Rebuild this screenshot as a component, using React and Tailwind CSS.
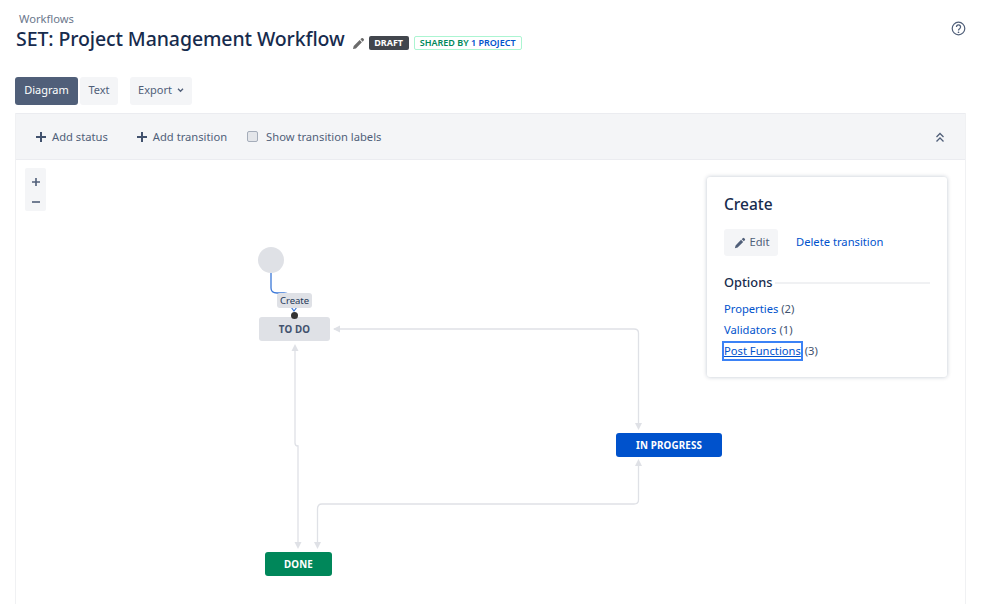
import React from "react";

const Pencil = ({ className }) => (
  <svg viewBox="0 0 16 16" className={className} fill="currentColor">
    <path d="M11.6 1.6a1.4 1.4 0 0 1 2 0l.8.8a1.4 1.4 0 0 1 0 2l-1.3 1.3-2.8-2.8zM9.4 3.8l2.8 2.8-7.4 7.4-3.6.9.9-3.7z" />
  </svg>
);

const Plus = () => (
  <svg viewBox="0 0 10 10" className="w-[10px] h-[10px]" fill="#42526e">
    <path d="M4 0h2v4h4v2H6v4H4V6H0V4h4z" />
  </svg>
);

const Node = ({ className, children }) => (
  <div className={`absolute flex items-center justify-center pt-[2px] rounded-[3px] text-[9.8px] tracking-[0.15px] font-bold h-[24px] ${className}`}>
    {children}
  </div>
);

const Arrow = ({ x, y, dir }) => {
  const pts = {
    down: `${x - 3.5},${y - 7} ${x + 3.5},${y - 7} ${x},${y}`,
    up: `${x - 3.5},${y + 7} ${x + 3.5},${y + 7} ${x},${y}`,
    left: `${x + 7},${y - 3.5} ${x + 7},${y + 3.5} ${x},${y}`,
  }[dir];
  return <polygon points={pts} fill="#dfe1e6" />;
};

export default function App() {
  return (
    <div className="relative w-[998px] h-[604px] overflow-hidden bg-white text-[#172b4d] font-['Noto_Sans','Open_Sans',sans-serif]">
      <div className="pl-[16px] pr-[32px] pt-[11px] flex justify-between items-start">
        <div>
          <div className="pl-[3px] text-[11.2px] leading-[15px] text-[#6b778c]">Workflows</div>
          <div className="flex items-center mt-[-1px]">
            <h1 className="text-[19.5px] leading-[28px] font-medium tracking-[-0.1px] whitespace-nowrap">SET: Project Management Workflow</h1>
            <Pencil className="w-[13px] h-[13px] ml-[7px] mt-[8px] text-[#6b6b6b]" />
            <span className="ml-[4px] mt-[8px] h-[14px] w-[40px] text-center rounded-[2px] bg-[#42464d] text-white text-[9px] leading-[14px] font-bold">DRAFT</span>
            <span className="ml-[5px] mt-[8px] h-[14px] w-[108px] text-center rounded-[2px] border border-[#abf5d1] text-[9px] leading-[12px] font-semibold whitespace-nowrap">
              <span className="text-[#00875a]">SHARED BY </span>
              <span className="text-[#0052cc]">1 PROJECT</span>
            </span>
          </div>
        </div>
        <svg viewBox="0 0 16 16" className="w-[15px] h-[15px] mt-[10px] text-[#505f79]" fill="none" stroke="currentColor">
          <circle cx="8" cy="8" r="6.7" strokeWidth="1.3" />
          <path d="M5.8 6.3a2.2 2.2 0 1 1 3.4 1.9c-.8.5-1.2.9-1.2 1.8" strokeWidth="1.4" />
          <circle cx="8" cy="12" r=".9" fill="currentColor" stroke="none" />
        </svg>
      </div>

      <div className="flex pl-[15px] mt-[24px] text-[11px] leading-[26px]">
        <div className="h-[28px] w-[63px] text-center rounded-[3px] bg-[#505f79] text-white">Diagram</div>
        <div className="h-[28px] w-[38px] ml-[2px] text-center rounded-[3px] bg-[#f4f5f7] text-[#505f79]">Text</div>
        <div className="h-[28px] w-[62px] ml-[12px] pb-[2px] rounded-[3px] bg-[#f4f5f7] text-[#505f79] flex items-center justify-center gap-[5px]">
          Export
          <svg viewBox="0 0 8 6" className="w-[7px] h-[5px]" fill="none" stroke="#505f79" strokeWidth="1.6"><path d="M1 1l3 3 3-3" /></svg>
        </div>
      </div>

      <div className="mt-[8px] ml-[15px] w-[951px] h-[491px] border-x border-[#f0f1f3]">
        <div className="h-[47px] pt-[1px] bg-[#f4f5f7] border-y border-[#ebecf0] flex items-center text-[11.2px] text-[#505f79] relative">
          <div className="ml-[20px] flex items-center gap-[6px]"><Plus />Add status</div>
          <div className="ml-[29px] flex items-center gap-[6px]"><Plus />Add transition</div>
          <div className="ml-[20px] w-[11px] h-[11px] mb-[2px] rounded-[2px] border border-[#a5adba] bg-[#e4e6ea]" />
          <div className="ml-[8px]">Show transition labels</div>
          <svg viewBox="0 0 10 10" className="absolute right-[20px] top-[18px] w-[10px] h-[11px]" fill="none" stroke="#505f79" strokeWidth="1.3">
            <path d="M1.5 4.5L5 1l3.5 3.5M1.5 9L5 5.5 8.5 9" />
          </svg>
        </div>
      </div>

      <div className="absolute left-[25px] top-[168px] w-[21px] h-[43px] rounded-[2px] bg-[#f4f5f7] flex flex-col items-center gap-[12px] pt-[10px] text-[#505f79]">
        <svg viewBox="0 0 8 8" className="w-[8px] h-[8px]" fill="currentColor"><path d="M3.2 0h1.6v3.2H8v1.6H4.8V8H3.2V4.8H0V3.2h3.2z" /></svg>
        <svg viewBox="0 0 8 8" className="w-[8px] h-[8px]" fill="currentColor"><path d="M0 3.2h8v1.6H0z" /></svg>
      </div>

      <svg className="absolute left-0 top-0" width="998" height="604" fill="none">
        <path d="M334 329H634Q638.500 329 638.500 333V424" stroke="#dfe1e6" strokeWidth="1.300" />
        <path d="M638.500 464V500Q638.500 504 634 504H322Q317.500 504 317.500 509V544" stroke="#dfe1e6" strokeWidth="1.300" />
        <path d="M295 349V443Q295 446 298 446V543" stroke="#dfe1e6" strokeWidth="1.300" />
        <Arrow x={333} y={329} dir="left" />
        <Arrow x={638.5} y={430} dir="down" />
        <Arrow x={638.5} y={459} dir="up" />
        <Arrow x={317.5} y={549} dir="down" />
        <Arrow x={298} y={549} dir="down" />
        <Arrow x={295} y={344} dir="up" />
        <circle cx="271" cy="260" r="13" fill="#dfe1e6" />
        <path d="M271 273V288Q271 293 277 293H284Q290 293 292 300L294 308" stroke="#3b78d8" strokeWidth="1.300" />
        <path d="M291 307l3 4 3-4" stroke="#3b78d8" strokeWidth="1.200" />
      </svg>

      <Node className="left-[259px] top-[317px] w-[71px] bg-[#dfe1e6] text-[#42526e]">TO DO</Node>
      <div className="absolute left-[277px] top-[293px] w-[35px] h-[15px] rounded-[3px] bg-[#dfe1e6] text-[#253858] text-[9.5px] leading-[15px] text-center">Create</div>
      <div className="absolute left-[291px] top-[312px] w-[7px] h-[7px] rounded-full bg-[#333]" />
      <Node className="left-[616px] top-[433px] w-[106px] bg-[#0052cc] text-white">IN PROGRESS</Node>
      <Node className="left-[265px] top-[552px] w-[67px] bg-[#00875a] text-white">DONE</Node>

      <div className="absolute left-[707px] top-[177px] w-[240px] h-[200px] rounded-[3px] bg-white shadow-[0_0_4px_rgba(9,30,66,0.25)] pt-[16px] px-[17px]">
        <div className="text-[15.5px] leading-[22px] font-medium">Create</div>
        <div className="flex items-center mt-[14px] text-[11.2px]">
          <div className="w-[54px] h-[27px] pl-[2px] rounded-[3px] bg-[#f4f5f7] flex items-center justify-center gap-[3px] text-[#505f79]">
            <Pencil className="w-[12px] h-[12px] text-[#505f79]" />Edit
          </div>
          <div className="ml-[18px] text-[#0052cc]">Delete transition</div>
        </div>
        <div className="flex items-center mt-[16px] gap-[3px]">
          <div className="text-[12.8px] leading-[20px] font-medium">Options</div>
          <div className="flex-1 h-[2px] mt-[1px] bg-[#f0f1f3]" />
        </div>
        <div className="mt-[6px] text-[11.2px] leading-[21px] text-[#42526e]">
          <div><span className="text-[#0052cc]">Properties</span> (2)</div>
          <div><span className="text-[#0052cc]">Validators</span> (1)</div>
          <div><span className="inline-block leading-[16px] text-[#0052cc] underline outline-2 outline-[#3b82f6] mr-[1px]">Post Functions</span> (3)</div>
        </div>
      </div>
    </div>
  );
}
